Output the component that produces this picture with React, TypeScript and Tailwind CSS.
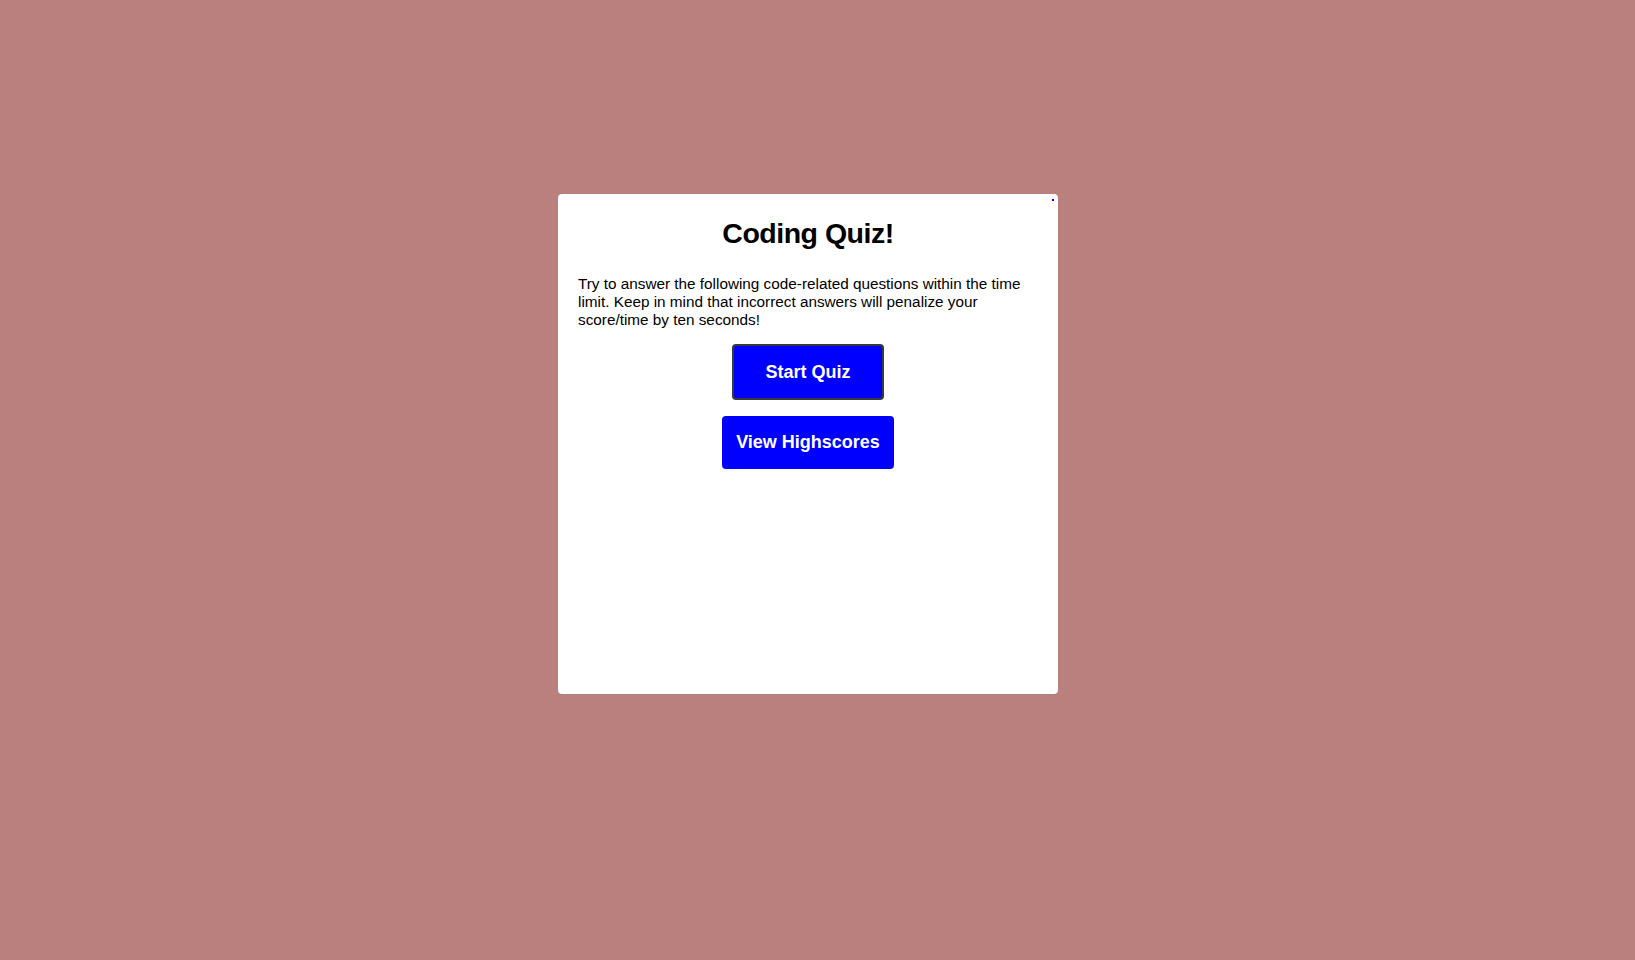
export default function App() {
  return (
    <div className="min-h-screen w-full bg-[#ba807d] flex justify-center pr-[19px] pt-[194px] font-['Liberation_Sans',sans-serif]">
      {/* ================= QUIZ CARD ================= */}
      <div className="relative w-[500px] h-[500px] bg-white rounded-[4px] px-5 pt-[21px]">
        {/* timer placeholder dot */}
        <div className="absolute top-[5px] right-[4px] w-[2px] h-[2px] bg-[#0000ff]" />

        <h1 className="text-center text-[28.5px] font-bold leading-[36px] tracking-[-0.5px] text-black">
          Coding Quiz!
        </h1>

        <p className="mt-[24px] text-[15.3px] leading-[18px] text-black">
          Try to answer the following code-related questions within the time
          limit. Keep in mind that incorrect answers will penalize your
          score/time by ten seconds!
        </p>

        {/* ================= BUTTONS ================= */}
        <div className="flex flex-col items-center mt-[15px]">
          <button className="w-[152px] h-[56px] rounded-[4px] border-2 border-[#3a3a3a] bg-[#0000ff] text-white text-[18px] font-bold">
            Start Quiz
          </button>
          <button className="mt-[16px] w-[172px] h-[53px] rounded-[4px] bg-[#0000ff] text-white text-[18px] font-bold">
            View Highscores
          </button>
        </div>
      </div>
    </div>
  );
}
